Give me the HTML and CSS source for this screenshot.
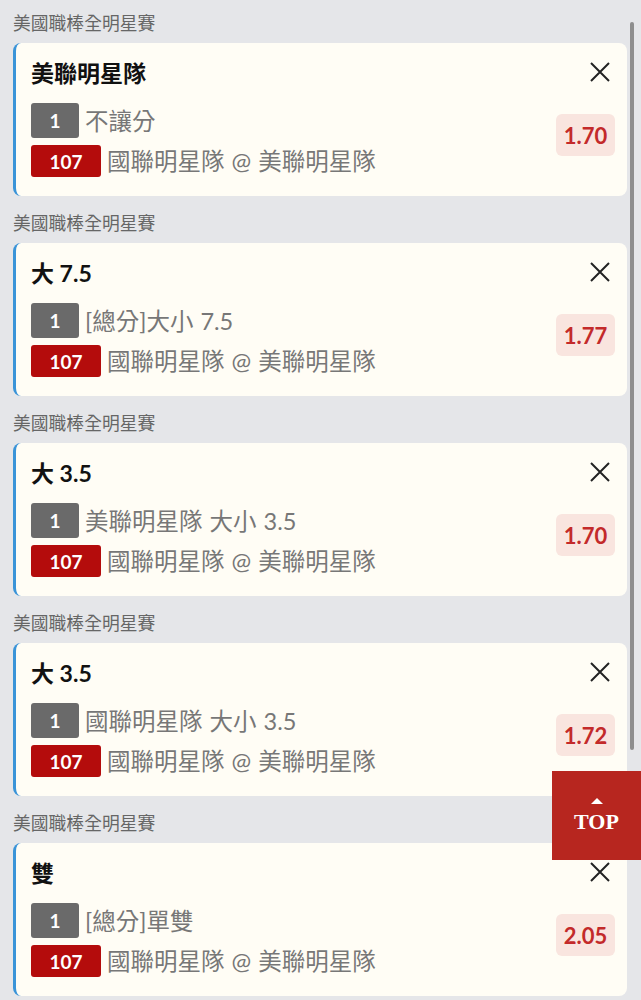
FILE: index.html
```html
<!DOCTYPE html>
<html lang="zh-Hant">
<head>
    <meta charset="UTF-8">
    <meta name="viewport" content="width=device-width, initial-scale=1.0">
    <title>投注單</title>
    <link rel="stylesheet" href="styles.css">
</head>
<body>
    <div class="bet-list">
        <div class="group">
            <div class="league">美國職棒全明星賽</div>
            <div class="bet-card">
                <div class="bet-info">
                    <div class="bet-title">美聯明星隊</div>
                    <div class="bet-row"><span class="tag tag-grey">1</span><span class="row-text">不讓分</span></div>
                    <div class="bet-row"><span class="tag tag-red">107</span><span class="row-text">國聯明星隊 @ 美聯明星隊</span></div>
                </div>
                <div class="bet-side">
                    <svg class="close" viewBox="0 0 22 22" width="22" height="22"><path d="M2 2 L20 20 M20 2 L2 20" stroke="#222" stroke-width="2" fill="none"/></svg>
                    <div class="odds">1.70</div>
                </div>
            </div>
        </div>
        <div class="group">
            <div class="league">美國職棒全明星賽</div>
            <div class="bet-card">
                <div class="bet-info">
                    <div class="bet-title">大 7.5</div>
                    <div class="bet-row"><span class="tag tag-grey">1</span><span class="row-text">[總分]大小 7.5</span></div>
                    <div class="bet-row"><span class="tag tag-red">107</span><span class="row-text">國聯明星隊 @ 美聯明星隊</span></div>
                </div>
                <div class="bet-side">
                    <svg class="close" viewBox="0 0 22 22" width="22" height="22"><path d="M2 2 L20 20 M20 2 L2 20" stroke="#222" stroke-width="2" fill="none"/></svg>
                    <div class="odds">1.77</div>
                </div>
            </div>
        </div>
        <div class="group">
            <div class="league">美國職棒全明星賽</div>
            <div class="bet-card">
                <div class="bet-info">
                    <div class="bet-title">大 3.5</div>
                    <div class="bet-row"><span class="tag tag-grey">1</span><span class="row-text">美聯明星隊 大小 3.5</span></div>
                    <div class="bet-row"><span class="tag tag-red">107</span><span class="row-text">國聯明星隊 @ 美聯明星隊</span></div>
                </div>
                <div class="bet-side">
                    <svg class="close" viewBox="0 0 22 22" width="22" height="22"><path d="M2 2 L20 20 M20 2 L2 20" stroke="#222" stroke-width="2" fill="none"/></svg>
                    <div class="odds">1.70</div>
                </div>
            </div>
        </div>
        <div class="group">
            <div class="league">美國職棒全明星賽</div>
            <div class="bet-card">
                <div class="bet-info">
                    <div class="bet-title">大 3.5</div>
                    <div class="bet-row"><span class="tag tag-grey">1</span><span class="row-text">國聯明星隊 大小 3.5</span></div>
                    <div class="bet-row"><span class="tag tag-red">107</span><span class="row-text">國聯明星隊 @ 美聯明星隊</span></div>
                </div>
                <div class="bet-side">
                    <svg class="close" viewBox="0 0 22 22" width="22" height="22"><path d="M2 2 L20 20 M20 2 L2 20" stroke="#222" stroke-width="2" fill="none"/></svg>
                    <div class="odds">1.72</div>
                </div>
            </div>
        </div>
        <div class="group">
            <div class="league">美國職棒全明星賽</div>
            <div class="bet-card">
                <div class="bet-info">
                    <div class="bet-title">雙</div>
                    <div class="bet-row"><span class="tag tag-grey">1</span><span class="row-text">[總分]單雙</span></div>
                    <div class="bet-row"><span class="tag tag-red">107</span><span class="row-text">國聯明星隊 @ 美聯明星隊</span></div>
                </div>
                <div class="bet-side">
                    <svg class="close" viewBox="0 0 22 22" width="22" height="22"><path d="M2 2 L20 20 M20 2 L2 20" stroke="#222" stroke-width="2" fill="none"/></svg>
                    <div class="odds">2.05</div>
                </div>
            </div>
        </div>
    </div>
    <div class="scrollbar"></div>
    <a class="top-btn" href="#"><span class="top-arrow"></span>TOP</a>
</body>
</html>
```

FILE: styles.css
```css
body {
    margin: 0;
    background: #e5e6e9;
    font-family: 'Lato', 'Noto Sans CJK TC', sans-serif;
    color: #222;
    overflow: hidden;
}
.bet-list {
    padding: 0 14px 0 13px;
}
.league {
    font-size: 17.8px;
    line-height: 24px;
    color: #666;
    padding: 15px 0 8px;
}
.group:first-child .league {
    padding-top: 11px;
}
.bet-card {
    display: flex;
    justify-content: space-between;
    background: #fffdf5;
    border-left: 3px solid #3a94d8;
    border-radius: 8px;
    padding: 15px 12px 19px 15px;
}
.bet-title {
    font-size: 23px;
    line-height: 30px;
    font-weight: 700;
    color: #111;
    margin-bottom: 15px;
}
.bet-row {
    display: flex;
    align-items: center;
    gap: 6px;
    margin-bottom: 7px;
}
.bet-row:last-child {
    margin-bottom: 0;
}
.tag {
    display: flex;
    justify-content: center;
    align-items: center;
    color: #fff;
    font-weight: 700;
    font-size: 19px;
    border-radius: 3px;
}
.tag-grey {
    background: #6a6a6a;
    width: 48px;
    height: 35px;
}
.tag-red {
    background: #b40c0c;
    width: 70px;
    height: 32px;
}
.row-text {
    font-size: 23.5px;
    color: #777;
    line-height: 30px;
    word-spacing: 1px;
}
.bet-side {
    display: flex;
    flex-direction: column;
    align-items: flex-end;
}
.close {
    display: block;
    margin: 3px 4px 0 0;
}
.odds {
    margin-top: 31px;
    width: 59px;
    height: 42px;
    display: flex;
    justify-content: center;
    align-items: center;
    background: #f9e5df;
    border-radius: 6px;
    color: #c32a2a;
    font-weight: 700;
    font-size: 22px;
}
.scrollbar {
    position: fixed;
    left: 630px;
    top: 22px;
    width: 4px;
    height: 728px;
    background: #8e8e8e;
    border-radius: 2px;
}
.top-btn {
    position: fixed;
    left: 552px;
    top: 771px;
    width: 89px;
    height: 89px;
    background: #b7261f;
    color: #fff;
    text-decoration: none;
    font-family: 'Liberation Serif', serif;
    font-weight: 700;
    font-size: 22px;
    display: flex;
    flex-direction: column;
    align-items: center;
    justify-content: center;
    line-height: 24px;
}
.top-arrow {
    width: 0;
    height: 0;
    border-left: 6px solid transparent;
    border-right: 6px solid transparent;
    border-bottom: 6px solid #fff;
    margin-bottom: 6px;
}
```
